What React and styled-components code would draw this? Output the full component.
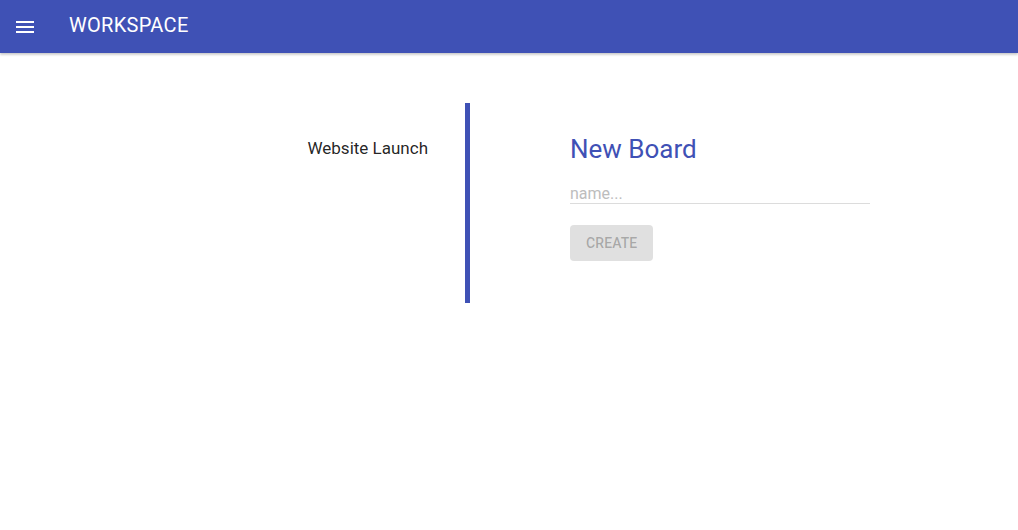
import React from 'react';
import styled, { createGlobalStyle } from 'styled-components';

const GlobalStyle = createGlobalStyle`
  body {
    margin: 0;
    background: #fff;
    font-family: Roboto, 'Liberation Sans', sans-serif;
  }
`;

const AppBar = styled.header`
  height: 53px;
  background: #3f51b5;
  color: #fff;
  display: flex;
  align-items: center;
  padding: 0 13px;
  box-shadow: 0 1px 3px rgba(0,0,0,0.2), 0 2px 2px rgba(0,0,0,0.08);
  position: relative;
  z-index: 1;
`;

const MenuButton = styled.button`
  border: none;
  background: transparent;
  padding: 0;
  width: 24px;
  height: 24px;
  display: flex;
  color: #fff;
  cursor: pointer;
`;

const Title = styled.h1`
  margin: 0 0 4px 32px;
  font-size: 20px;
  font-weight: 400;
  letter-spacing: 0.3px;
  line-height: 1.6;
`;

const Main = styled.main`
  display: flex;
  padding-top: 50px;
`;

const BoardList = styled.div`
  width: 465px;
  box-sizing: border-box;
  padding: 33px 37px 0 0;
  text-align: right;
`;

const BoardItem = styled.div`
  font-size: 17px;
  line-height: 24px;
  color: rgba(0,0,0,0.87);
`;

const Divider = styled.div`
  width: 5px;
  height: 200px;
  background: #3f51b5;
`;

const Form = styled.div`
  padding: 30px 0 0 100px;
  display: flex;
  flex-direction: column;
  align-items: flex-start;
`;

const FormTitle = styled.h2`
  margin: 0;
  font-size: 26px;
  font-weight: 400;
  line-height: 32px;
  color: #3f51b5;
`;

const NameInput = styled.input`
  margin-top: 18px;
  width: 300px;
  box-sizing: border-box;
  border: none;
  border-bottom: 1px solid #dcdcdc;
  padding: 0;
  font-family: inherit;
  font-size: 16px;
  line-height: 20px;
  height: 21px;
  outline: none;
  color: rgba(0,0,0,0.87);
  &::placeholder {
    color: #bdbdbd;
    opacity: 1;
  }
`;

const CreateButton = styled.button`
  margin-top: 21px;
  height: 36px;
  min-width: 64px;
  padding: 6px 16px;
  border: none;
  border-radius: 4px;
  background: #e0e0e0;
  color: rgba(0,0,0,0.26);
  font-family: inherit;
  font-size: 14px;
  font-weight: 500;
  letter-spacing: 0.1px;
  text-transform: uppercase;
`;

const MenuIcon = () => (
  <svg width="24" height="24" viewBox="0 0 24 24" fill="currentColor">
    <path d="M3 18h18v-2H3v2zm0-5h18v-2H3v2zm0-7v2h18V6H3z" />
  </svg>
);

const App = () => {
  const boards = [{ id: 1, name: 'Website Launch' }];

  return (
    <>
      <GlobalStyle />
      <AppBar>
        <MenuButton aria-label="menu">
          <MenuIcon />
        </MenuButton>
        <Title>WORKSPACE</Title>
      </AppBar>
      <Main>
        <BoardList>
          {boards.map(board => (
            <BoardItem key={board.id}>{board.name}</BoardItem>
          ))}
        </BoardList>
        <Divider />
        <Form>
          <FormTitle>New Board</FormTitle>
          <NameInput placeholder="name..." />
          <CreateButton disabled>Create</CreateButton>
        </Form>
      </Main>
    </>
  );
};

export default App;
